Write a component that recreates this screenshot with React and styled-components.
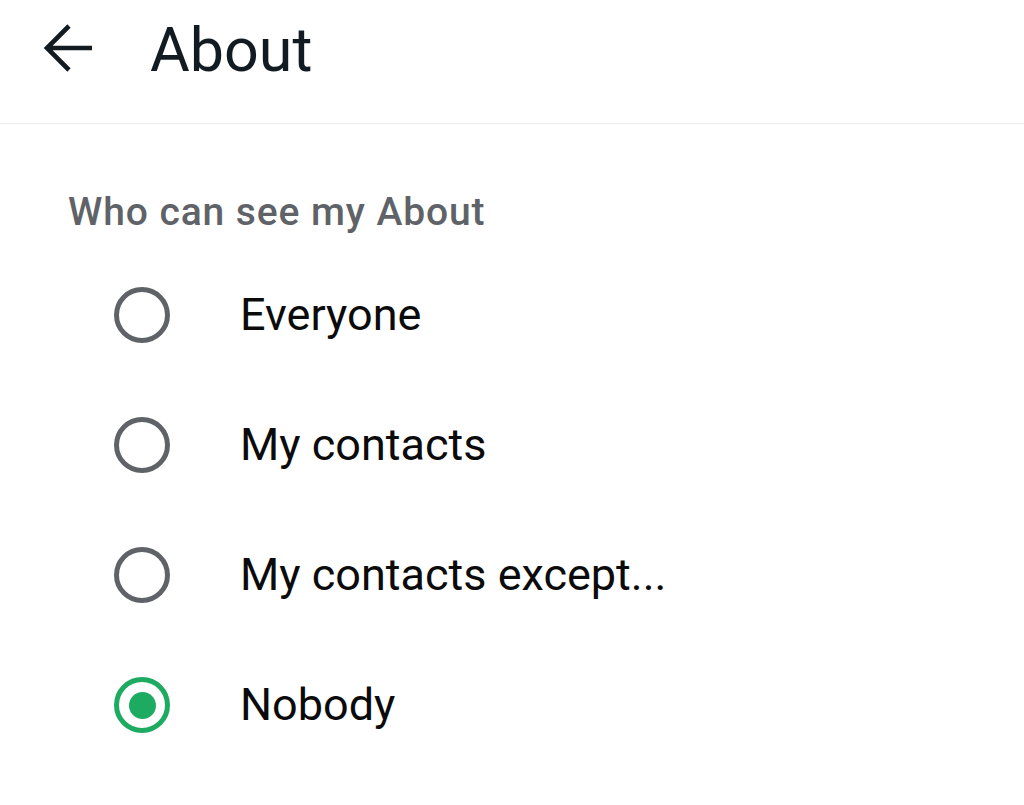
import React, { useState } from 'react'
import styled, { createGlobalStyle } from 'styled-components'

const GlobalStyle = createGlobalStyle`
  html, body {
    margin: 0;
    padding: 0;
    background: #ffffff;
  }
  body {
    font-family: Roboto, 'Noto Sans', 'Liberation Sans', sans-serif;
    color: #111b21;
  }
`

const options = ['Everyone', 'My contacts', 'My contacts except...', 'Nobody']

const BackArrow = () => (
  <svg width='50' height='50' viewBox='0 0 50 50' fill='none'>
    <path
      d='M49 25 H4 M26 3 L4 25 L26 47'
      stroke='#111b21'
      strokeWidth='4.6'
      strokeLinejoin='miter'
    />
  </svg>
)

const App = () => {
  const [selected, setSelected] = useState('Nobody')
  return (
    <Page>
      <GlobalStyle />
      <Header>
        <BackButton type='button'>
          <BackArrow />
        </BackButton>
        <Title>About</Title>
      </Header>
      <Section>
        <SectionTitle>Who can see my About</SectionTitle>
        <OptionList>
          {options.map((opt) => (
            <OptionRow key={opt} onClick={() => setSelected(opt)}>
              <Radio $checked={selected === opt} />
              <Label>{opt}</Label>
            </OptionRow>
          ))}
        </OptionList>
      </Section>
    </Page>
  )
}

const Page = styled.div`
  width: 1024px;
  min-height: 805px;
  background: #fff;
`

const Header = styled.header`
  height: 124px;
  box-sizing: border-box;
  display: flex;
  align-items: flex-start;
  padding: 23px 0 0 43px;
  border-bottom: 1.5px solid #ececec;
`

const BackButton = styled.button`
  width: 50px;
  height: 50px;
  padding: 0;
  border: none;
  background: transparent;
  display: flex;
  align-items: center;
  justify-content: center;
  cursor: pointer;
`

const Title = styled.h1`
  margin: -9px 0 0 57px;
  font-size: 61px;
  line-height: 72px;
  font-weight: 400;
  color: #111b21;
`

const Section = styled.section`
  padding: 69px 0 0 68px;
`

const SectionTitle = styled.h2`
  margin: 0;
  font-size: 39px;
  line-height: 39px;
  font-weight: 500;
  color: #5f6368;
  letter-spacing: 0.9px;
`

const OptionList = styled.div`
  margin-top: 18px;
  display: flex;
  flex-direction: column;
`

const OptionRow = styled.div`
  height: 130px;
  display: flex;
  align-items: center;
  padding-left: 46px;
  cursor: pointer;
`

const Radio = styled.span`
  width: 56px;
  height: 56px;
  box-sizing: border-box;
  border-radius: 50%;
  border: 5px solid ${(p) => (p.$checked ? '#1daa61' : '#5f6368')};
  display: flex;
  align-items: center;
  justify-content: center;
  flex-shrink: 0;

  &::after {
    content: '';
    width: 27px;
    height: 27px;
    border-radius: 50%;
    background: #1daa61;
    display: ${(p) => (p.$checked ? 'block' : 'none')};
  }
`

const Label = styled.span`
  margin-left: 70px;
  font-size: 45px;
  line-height: 52px;
  color: #0b0b0b;
`

export default App
